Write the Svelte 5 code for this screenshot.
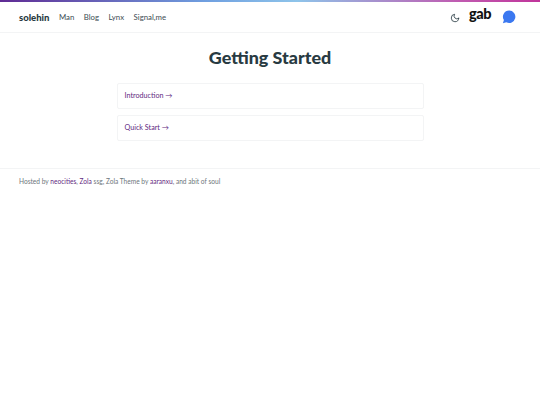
<script lang="ts">
	const navLinks = ['Man', 'Blog', 'Lynx', 'Signal,me'];
	const cards = ['Introduction →', 'Quick Start →'];
</script>

<div class="page">
	<header class="site-header">
		<nav class="nav-left">
			<a class="logo" href="#top">solehin</a>
			{#each navLinks as link}
				<a class="nav-link" href="#top">{link}</a>
			{/each}
		</nav>
		<div class="nav-right">
			<svg class="moon" viewBox="0 0 24 24" width="10" height="10" fill="none" stroke="#283a42" stroke-width="2" stroke-linecap="round" stroke-linejoin="round">
				<path d="M21 12.8A9 9 0 1 1 11.2 3a7 7 0 0 0 9.8 9.8z" />
			</svg>
			<span class="gab">gab</span>
			<svg class="chat" viewBox="0 0 14 14" width="14" height="14">
				<path fill="#3b78f0" d="M7.2.6a6.2 6.2 0 1 1-2.9 11.7L.9 13.3l1-3.2A6.2 6.2 0 0 1 7.2.6z" />
			</svg>
		</div>
	</header>

	<main class="content">
		<h1>Getting Started</h1>
		{#each cards as card}
			<a class="card" href="#top">{card}</a>
		{/each}
	</main>

	<footer class="site-footer">
		Hosted by <a href="#top">neocities</a>, <a href="#top">Zola</a> ssg, Zola Theme by <a href="#top">aaranxu</a>, and abit of soul
	</footer>
</div>

<style>
	:global(body) {
		background: #fff;
	}

	.page {
		font-family: Lato, "Open Sans", sans-serif;
		border-top: 2px solid transparent;
		border-image: linear-gradient(90deg, #5f2a93 0%, #6f9fe0 38%, #8ec4ea 55%, #c05ab0 85%, #c0349a 100%) 1;
		border-left: 0;
		border-right: 0;
		border-bottom: 0;
	}

	.site-header {
		display: flex;
		justify-content: space-between;
		align-items: center;
		height: 30px;
		padding: 0 24px 0 19px;
		border-bottom: 1px solid #f3f4f5;
	}

	.nav-left {
		display: flex;
		align-items: center;
		gap: 9.5px;
	}

	.logo {
		font-size: 9.5px;
		font-weight: 900;
		color: #283a42;
		text-decoration: none;
	}

	.nav-link {
		font-size: 7.8px;
		color: #3d4c53;
		text-decoration: none;
	}

	.nav-right {
		display: flex;
		align-items: center;
	}

	.moon {
		margin-top: 2px;
	}

	.gab {
		font-size: 14.5px;
		font-weight: 900;
		line-height: 14px;
		letter-spacing: -0.5px;
		color: #111;
		margin: -6px 11px 0 9px;
	}

	.content {
		display: flex;
		flex-direction: column;
		align-items: center;
		padding-top: 14px;
		height: 135px;
		box-sizing: border-box;
	}

	h1 {
		margin: 0 0 15px;
		font-size: 17.9px;
		line-height: 21px;
		font-weight: 900;
		color: #283a42;
	}

	.card {
		box-sizing: border-box;
		width: 307px;
		height: 26px;
		margin-bottom: 6px;
		padding: 0 7px 1px;
		display: flex;
		align-items: center;
		font-size: 7.2px;
		color: #5f2a7f;
		text-decoration: none;
		border: 1px solid #f3f4f5;
		border-radius: 2px;
	}

	.site-footer {
		border-top: 1px solid #f3f4f5;
		padding: 7px 19px 0;
		font-size: 6.6px;
		line-height: 11px;
		color: #6d767b;
	}

	.site-footer a {
		color: #5f2a7f;
		text-decoration: none;
	}
</style>
